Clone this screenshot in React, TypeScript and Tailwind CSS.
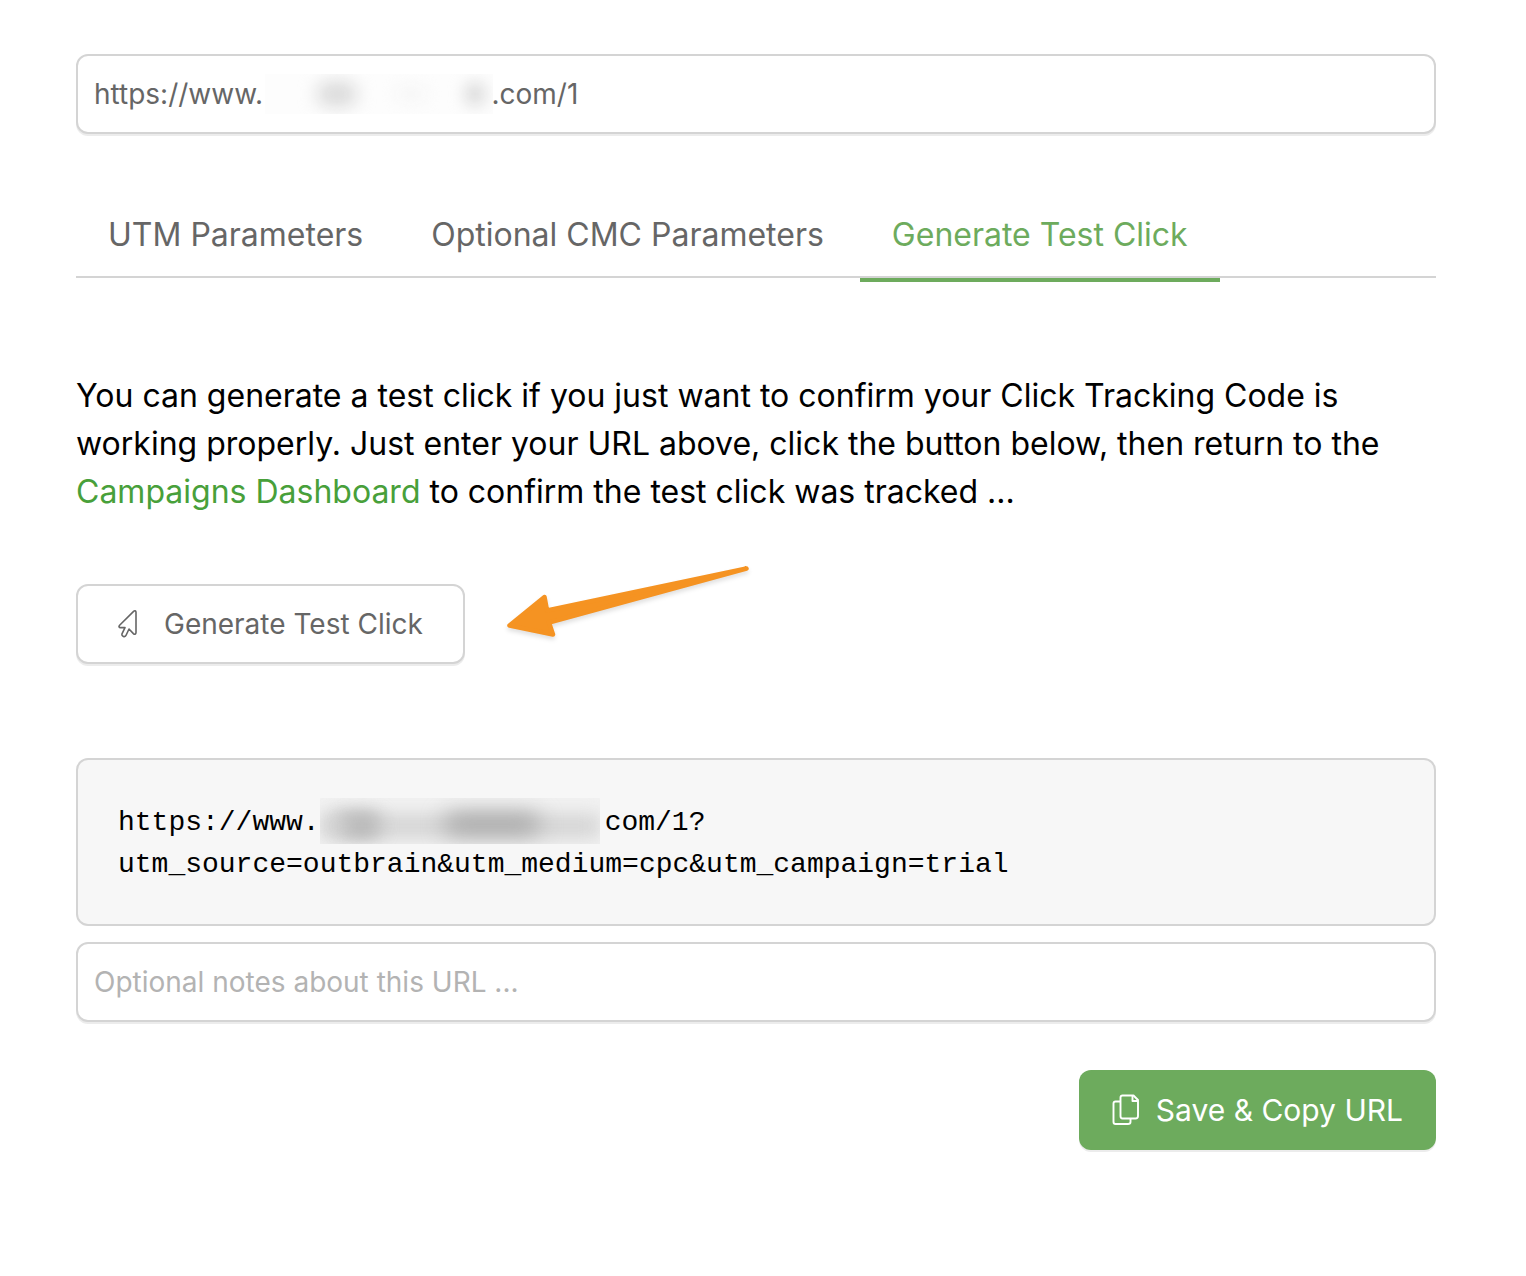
import React, { useState } from "react";
import clsx from "clsx";

const tabs = ["UTM Parameters", "Optional CMC Parameters", "Generate Test Click"];

const CursorIcon = () => (
  <svg width="20" height="28" viewBox="0 0 20 28" fill="none" aria-hidden="true">
    <path
      d="M15.6 1.4 1.6 15.2C.5 16.4 1 17.6 2.5 17.6H7L4.1 23.6C3.6 25 4.2 26 5.4 26.4C6.6 26.8 7.7 26.3 8.2 25L11 19L15.4 23.6C16.6 24.8 18 24.3 18 22.6V2.2C18 .7 16.6 .4 15.6 1.4Z"
      stroke="currentColor"
      strokeWidth="1.6"
      strokeLinejoin="round"
    />
  </svg>
);

const CopyIcon = () => (
  <svg width="28" height="32" viewBox="0 0 28 32" fill="none" aria-hidden="true">
    <g stroke="currentColor" strokeWidth="1.9" strokeLinejoin="round">
      <path d="M10.5 1.5H21.5L26 6V22Q26 24.5 23.5 24.5H10.5Q8.5 24.5 8.5 22V3.5Q8.5 1.5 10.5 1.5Z" />
      <path d="M20.5 1.5V7H26" />
      <path d="M8.5 7.5H3.5Q1.5 7.5 1.5 9.5V28Q1.5 30 3.5 30H16Q18.5 30 18.5 28V24.5" />
    </g>
  </svg>
);

const Arrow = () => (
  <svg
    width="250"
    height="80"
    viewBox="0 0 250 80"
    aria-hidden="true"
    className="overflow-visible drop-shadow-[0_3px_2px_rgba(0,0,0,0.12)]"
  >
    <path
      d="M245.5 4.5 46 46.5 43.5 33 8.5 61.5 52 70.5 48 58.5Z"
      fill="#f59322"
      stroke="#f59322"
      strokeWidth="4.5"
      strokeLinejoin="round"
    />
  </svg>
);

const App = () => {
  const [activeTab, setActiveTab] = useState(2);
  const [url, setUrl] = useState("https://www." + "\u00a0".repeat(29) + ".com/1");
  const [notes, setNotes] = useState("");

  return (
    <main className="flex min-h-screen flex-col bg-white pt-[54px] pr-[90px] pb-20 pl-[76px] font-['Inter',sans-serif] text-black">
      <div className="relative">
        <input
          type="text"
          aria-label="URL"
          value={url}
          onChange={(e) => setUrl(e.target.value)}
          className="h-20 w-full rounded-xl border-2 border-[#d4d4d4] bg-white px-4 text-[28px] text-[#666] shadow-[0_2px_0_#ececec] outline-none"
        />
        <div className="pointer-events-none absolute top-5 left-[189px] h-10 w-[228px] overflow-hidden bg-[#fdfdfd]">
          <div className="absolute top-2 left-[52px] h-6 w-10 rounded-full bg-[#d8d8d8] blur-[9px]" />
          <div className="absolute top-3 left-[130px] h-4 w-8 rounded-full bg-[#f6f6f6] blur-[8px]" />
          <div className="absolute top-2 left-[200px] h-6 w-5 rounded-full bg-[#d8d8d8] blur-[8px]" />
        </div>
      </div>

      <div role="tablist" className="mt-[60px] flex h-[84px] gap-1 border-b-2 border-[#d4d4d4]">
        {tabs.map((tab, i) => (
          <button
            key={tab}
            type="button"
            role="tab"
            aria-selected={i === activeTab}
            onClick={() => setActiveTab(i)}
            className={clsx(
              "-mb-1.5 box-content h-[82px] cursor-pointer px-8 pb-1.5 text-[32px] leading-[80px] whitespace-nowrap",
              i === activeTab
                ? "text-[#6dab5d] shadow-[inset_0_-4px_0_#6dab5d]"
                : "text-[#666]"
            )}
          >
            {tab}
          </button>
        ))}
      </div>

      <p className="mt-[94px] text-[32px] leading-[48px]">
        You can generate a test click if you just want to confirm your Click Tracking Code is
        working properly. Just enter your URL above, click the button below, then return to the{" "}
        <a href="#dashboard" className="text-[#48a03a]">
          Campaigns Dashboard
        </a>{" "}
        to confirm the test click was tracked ...
      </p>

      <div className="mt-12 flex h-[100px] items-end gap-9">
        <button
          type="button"
          className="flex h-20 cursor-pointer items-center gap-[26px] rounded-xl border-2 border-[#d4d4d4] bg-white px-10 text-[28px] whitespace-nowrap text-[#666] shadow-[0_2px_0_#ececec]"
        >
          <CursorIcon />
          Generate Test Click
        </button>
        <div className="self-start">
          <Arrow />
        </div>
      </div>

      <div className="mt-[94px] rounded-xl border-2 border-[#d4d4d4] bg-[#f7f7f7] px-10 pt-[42px] pb-[38px] font-['Liberation_Mono',monospace] text-[28px] leading-[42px]">
        https://www.
        <span className="relative inline-block h-[42px] w-[285px] align-top">
          <span className="absolute -top-1 left-0 h-[46px] w-[280px] overflow-hidden bg-[#f2f2f2]">
            <span className="absolute top-4 left-3 h-5 w-12 rounded-full bg-[#b0b0b0] blur-[9px]" />
            <span className="absolute top-4 left-0 h-6 w-[280px] bg-[#d4d4d4] blur-[9px]" />
            <span className="absolute top-5 left-6 h-4 w-9 rounded-full bg-[#b0b0b0] blur-[9px]" />
            <span className="absolute top-4 left-[124px] h-5 w-24 rounded-full bg-[#a4a4a4] blur-[11px]" />
          </span>
        </span>
        com/1?
        <br />
        utm_source=outbrain&amp;utm_medium=cpc&amp;utm_campaign=trial
      </div>

      <input
        type="text"
        aria-label="Optional notes"
        placeholder="Optional notes about this URL ..."
        value={notes}
        onChange={(e) => setNotes(e.target.value)}
        className="mt-4 h-20 w-full rounded-xl border-2 border-[#d4d4d4] bg-white px-4 text-[28px] text-[#666] shadow-[0_2px_0_#ececec] outline-none placeholder:text-[#b3b3b3]"
      />

      <button
        type="button"
        className="mt-12 flex h-20 cursor-pointer items-center gap-4 self-end rounded-xl bg-[#6dab5d] px-[33px] text-[30px] whitespace-nowrap text-white shadow-[0_2px_0_#ececec]"
      >
        <CopyIcon />
        Save &amp; Copy URL
      </button>
    </main>
  );
};

export default App;
